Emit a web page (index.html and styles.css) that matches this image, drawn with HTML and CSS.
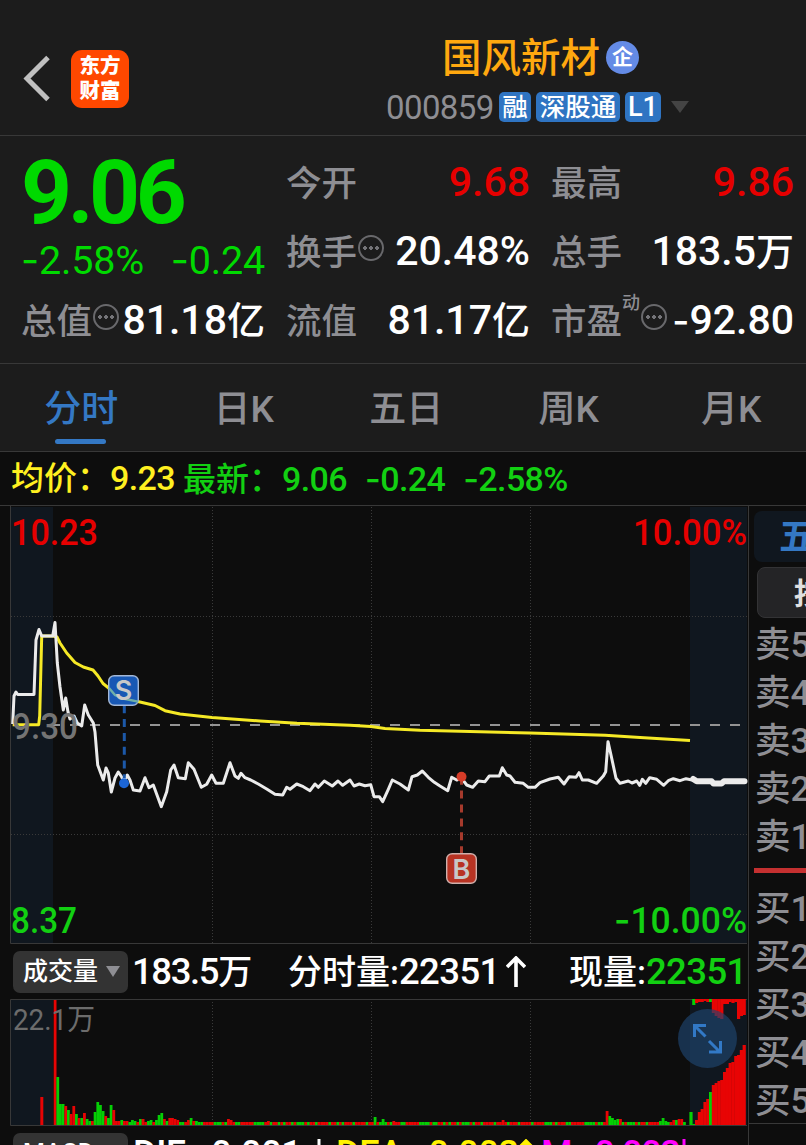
FILE: index.html
```html
<!DOCTYPE html>
<html lang="zh-CN">
<head>
    <meta charset="UTF-8">
    <meta name="viewport" content="width=device-width, initial-scale=1.0">
    <title>国风新材 000859</title>
    <link rel="stylesheet" href="styles.css">
</head>
<body>
    <header class="topbar">
        <svg class="back" width="30" height="50" viewBox="0 0 30 50">
            <path d="M27 3.5 6 24.5 27 45.5" fill="none" stroke="#c0c0c0" stroke-width="5"/>
        </svg>
        <div class="logo">东方<br>财富</div>
        <div class="stock">
            <div class="stock-name">国风新材<span class="badge">企</span></div>
            <div class="stock-code">
                <span class="code">000859</span>
                <span class="tag">融</span>
                <span class="tag tag-wide">深股通</span>
                <span class="tag tag-level">L1</span>
                <svg class="caret" width="18" height="12" viewBox="0 0 18 12"><path d="M0 0h18L9 12z" fill="#444"/></svg>
            </div>
        </div>
    </header>

    <!-- Quote -->
    <section class="quote">
        <div class="price">
            <div class="price-now">9.06</div>
            <div class="price-change"><span><i class="neg">-</i>2.58%</span><span><i class="neg">-</i>0.24</span></div>
        </div>
        <div class="stat"><span>今开</span><b class="up">9.68</b></div>
        <div class="stat"><span>最高</span><b class="up">9.86</b></div>
        <div class="stat"><span>换手</span><i class="more"></i><b>20.48%</b></div>
        <div class="stat"><span>总手</span><b>183.5<small>万</small></b></div>
        <div class="stat"><span>总值</span><i class="more"></i><b>81.18<small>亿</small></b></div>
        <div class="stat"><span>流值</span><b>81.17<small>亿</small></b></div>
        <div class="stat"><span>市盈</span><sup>动</sup><i class="more"></i><b><i class="neg">-</i>92.80</b></div>
    </section>

    <nav class="tabs">
        <a class="active">分时</a>
        <a>日K</a>
        <a>五日</a>
        <a>周K</a>
        <a>月K</a>
    </nav>

    <div class="summary">
        <span class="avg">均价：<em>9.23</em></span>
        <span class="last">最新：<em>9.06</em><em><i class="neg">-</i>0.24</em><em><i class="neg">-</i>2.58%</em></span>
    </div>

    <main class="board">
        <div class="charts">
            <!-- Price chart -->
            <svg class="chart" width="748" height="438" viewBox="0 506 748 438">
                <rect x="11" y="507" width="42" height="436" fill="#10171f"/>
                <rect x="690" y="507" width="57" height="436" fill="#10171f"/>
                <g class="grid">
                    <path d="M212.5 507V943M371.5 507V943M530.5 507V943"/>
                    <path d="M11 616.5H747M11 834.5H747"/>
                </g>
                <path class="frame" d="M10.5 506V943.5H747"/>
                <text class="lbl up" x="11" y="545" textLength="87" lengthAdjust="spacingAndGlyphs">10.23</text>
                <text class="lbl up" x="633" y="545" textLength="114" lengthAdjust="spacingAndGlyphs">10.00%</text>
                <text class="lbl down" x="11" y="933" textLength="66" lengthAdjust="spacingAndGlyphs">8.37</text>
                <text class="lbl down" x="614" y="933" textLength="133" lengthAdjust="spacingAndGlyphs"><tspan class="neg">-</tspan>10.00%</text>
                <path d="M50 725H741" stroke="#949494" stroke-width="2" stroke-dasharray="10 10"/>
                <polyline class="line-avg" points="12.7,724.7 38.7,724.7 39.7,716 41.7,636 53,636 57,637 60,643 66.7,653 75,662.5 83.3,667 93,670 98,676 103,683.5 108,687.5 115,695 123,698.5 140,702 155,705.5 165,710.7 180,714 212,717.5 260,721 297,723.3 350,725.3 371,726.5 385,728.5 420,730.3 530,733 605,735.3 640,737.5 690,740.5"/>
                <polyline class="line-price" points="12.7,724 14,696 16,692 17.7,694.5 34,694.5 36,640 39,629.5 41.7,636 52.7,636 55,622.5 57.3,663 60,687 63.3,710 65.7,698 68,712 70,719 74,716 77.3,723 81.7,726 84.7,705 88.3,715 93.3,723 95,732 97.7,765 103.3,780 106,768 108.3,773 111.3,792 115,778 118.3,772 121.7,777 124,782 127.3,775 130,780 133.3,790 140,791 145,777.7 149,787.7 153.3,785 161.3,806.7 166.7,791.7 170.7,770 174,765 178.3,777.7 185.3,778.7 188.3,762.7 194,769.3 201.3,787.3 206.7,784.3 211.7,775 216,783.3 223.3,783.3 230,762.7 235,776 238.3,778.3 241,773.3 245,777.7 250.7,780 258.3,784 266.7,789 275,794.3 282.7,795 286.7,787.3 290,789.3 296.7,784 303.3,786.7 310,790.7 315,784 318.3,787.3 324.3,781 332.3,786 338,781 342.7,785.3 350,780 354,786 359.3,784 365,785.7 370.7,784.7 374,796.7 379.3,796.7 382.7,801.7 388.3,789.3 392.3,780 400,784 408.3,790 412,776.7 417.3,775 422.3,771 428.3,777.3 434.3,782.3 440,786 447.7,790.7 451.7,777.3 456.7,780 461.7,778.3 466.7,785 472.7,787.3 478.3,781 485,781.7 489.3,776 499.3,776 502.3,767.7 506.7,775 510,776 515,782.3 523.3,783.3 528.3,787.3 535,787.3 540,782.7 550,779 558.3,777.3 564,784 569.3,776.7 576,777.3 579,772.7 582.3,780 588.3,780 596.7,783.3 603.3,776 605.7,771.7 608,741.7 611,755 616,778.3 620,783.3 628.3,781 632,783 636.7,781 639.7,785.3 642.3,779.3 645.7,783.3 649.7,777.7 656.7,779.3 663.7,785.3 668.3,780.7 673.3,778.7 680,780.7 686,778.7 692,780"/>
                <polyline class="line-price after" points="693.2,779 696.7,781.3 711.7,781.3 713.5,783.5 721.5,783.5 724,781.3 744.5,781.3"/>
                <text class="lbl mid" x="12" y="739" textLength="66" lengthAdjust="spacingAndGlyphs">9.30</text>

                <!-- Sell marker -->
                <path d="M124.3 705.3V778" stroke="#1c58a8" stroke-width="3" stroke-dasharray="8 5.8"/>
                <circle cx="124" cy="783.3" r="5" fill="#1c66d6"/>
                <rect x="108.7" y="675.7" width="29.6" height="29.6" rx="5.5" fill="#1858b4" stroke="#a3b8d8" stroke-width="1.4"/>
                <path d="M109 688 115 695 123 698.5 138 701.6" fill="none" stroke="#6fb0a8" stroke-width="2.4"/>
                <text class="mark" x="123.5" y="700">S</text>

                <!-- Buy marker -->
                <path d="M461.5 776.7V853" stroke="#a63a2c" stroke-width="3" stroke-dasharray="8 5.9"/>
                <circle cx="461.5" cy="776.7" r="5" fill="#d63c28"/>
                <rect x="446.7" y="853.7" width="29.6" height="29.6" rx="5.5" fill="#b83323" stroke="#d0b0ac" stroke-width="1.4"/>
                <text class="mark" x="461.5" y="878.5">B</text>
            </svg>

            <div class="indicator">
                <button class="picker">成交量<i class="tri"></i></button>
                <span class="ind-total"><em>183.5</em>万</span>
                <span class="ind-minute">分时量:<em>22351</em></span>
                <svg class="arrow" width="20" height="31" viewBox="0 0 20 31"><path d="M10 31V2M1 11l9-9 9 9" fill="none" stroke="#fff" stroke-width="3.6"/></svg>
                <span class="ind-now">现量:<em class="down">22351</em></span>
            </div>

            <!-- Volume chart -->
            <div class="volume">
                <svg class="chart" width="748" height="127" viewBox="0 999 748 127">
                    <rect x="11" y="1000" width="42" height="125" fill="#10171f"/>
                    <rect x="690" y="1000" width="57" height="125" fill="#10171f"/>
                    <path class="grid" d="M212.5 1002V1125M371.5 1002V1125M530.5 1002V1125"/>
                    <path class="frame" d="M747 999.5H10.5V1125.5H747"/>
                    <g id="bars"></g>
                    <text class="lbl-vol" x="13" y="1030" textLength="82" lengthAdjust="spacingAndGlyphs">22.1万</text>
                </svg>
                <button class="expand">
                    <svg width="59" height="59" viewBox="0 0 59 59" fill="none" stroke="#3279c6" stroke-width="3">
                        <path d="M28 16.5H16.5V28M17 17 27.5 27.5M31 32 42 43M42.5 32V43H31"/>
                    </svg>
                </button>
            </div>

            <div class="indicator macd">
                <button class="picker">MACD<i class="tri"></i></button>
                <span class="dif">DIF:<i class="neg">-</i>0.001</span>
                <svg class="arrow" width="18" height="30" viewBox="0 0 18 30"><path d="M9 0V28M1 20l8 8 8-8" fill="none" stroke="#fff" stroke-width="3"/></svg>
                <span class="dea">DEA:<i class="neg">-</i>0.002</span>
                <svg class="arrow" width="20" height="30" viewBox="0 0 20 30"><path d="M10 30V2M1 11l9-9 9 9" fill="none" stroke="#fff200" stroke-width="3.4"/></svg>
                <span class="m">M:<i class="neg">-</i>0.002</span>
                <svg class="arrow" width="18" height="30" viewBox="0 0 18 30"><path d="M9 0V28M1 20l8 8 8-8" fill="none" stroke="#ff00ff" stroke-width="3"/></svg>
            </div>
        </div>

        <!-- Order book -->
        <aside class="book">
            <div class="book-tab">五档</div>
            <div class="book-btn">按</div>
            <ul>
                <li>卖5</li>
                <li>卖4</li>
                <li>卖3</li>
                <li>卖2</li>
                <li>卖1</li>
            </ul>
            <div class="spread"></div>
            <ul>
                <li>买1</li>
                <li>买2</li>
                <li>买3</li>
                <li>买4</li>
                <li>买5</li>
            </ul>
        </aside>
    </main>

    <script src="script.js"></script>
</body>
</html>
```
FILE: styles.css
```css
* {
    margin: 0;
    padding: 0;
    box-sizing: border-box;
}

body {
    width: 806px;
    height: 1145px;
    overflow: hidden;
    background: #0d0d0d;
    color: #fff;
    font-family: Roboto, "Noto Sans CJK SC", sans-serif;
    font-weight: 500;
}

em,
i {
    font-style: normal;
}

button {
    border: none;
    font-family: inherit;
    color: inherit;
}

.up {
    color: #e60000;
    fill: #e60000;
}

.down {
    color: #12d012;
    fill: #12d012;
}

/* wider minus sign */
.neg {
    font-family: Inter, sans-serif;
}

/* Header */
.topbar {
    display: flex;
    height: 136px;
    padding-left: 21px;
    background: #1c1c1c;
    border-bottom: 1px solid #383838;
}

.back {
    margin-top: 54px;
}

.logo {
    width: 58px;
    height: 58px;
    margin: 50px 0 0 20px;
    padding-top: 4px;
    border-radius: 11px;
    background: #ff4800;
    font-size: 20.5px;
    font-weight: 900;
    line-height: 25px;
    text-align: center;
}

.stock {
    margin-left: 257px;
    padding-top: 32px;
}

.stock-name {
    display: flex;
    align-items: center;
    height: 50px;
    margin: -3px 0 0 56px;
    font-size: 39.5px;
    color: #ffa80f;
}

.badge {
    width: 33px;
    height: 33px;
    margin: 6px 0 0 6px;
    border-radius: 50%;
    background: #648be6;
    color: #fff;
    font-size: 21px;
    font-weight: 700;
    line-height: 32px;
    text-align: center;
}

.stock-code {
    display: flex;
    align-items: center;
    height: 30px;
    margin-top: 13px;
}

.code {
    width: 113px;
    color: #8e8e93;
    font-size: 33px;
    font-weight: 400;
    letter-spacing: -0.6px;
}

.tag {
    width: 32px;
    height: 30px;
    margin-right: 5px;
    border-radius: 5px;
    background: #2f74c2;
    font-size: 25.5px;
    line-height: 30px;
    text-align: center;
}

.tag-wide {
    width: 84px;
}

.tag-level {
    width: 36px;
    font-size: 27px;
}

.caret {
    margin-left: 5px;
}

/* Quote */
.quote {
    display: grid;
    grid-template-columns: 244px 244px 243px;
    grid-auto-rows: 69px;
    column-gap: 21px;
    height: 228px;
    padding: 12px 12px 0 21px;
    background: #1c1c1c;
    border-bottom: 1px solid #383838;
}

.price {
    grid-row: span 2;
    color: #00d900;
}

.price-now {
    height: 89px;
    font-size: 89px;
    font-weight: 700;
    line-height: 89px;
    letter-spacing: -4.4px;
}

.price-change {
    display: flex;
    justify-content: space-between;
    font-size: 39.5px;
    font-weight: 400;
    line-height: 46px;
    letter-spacing: -0.2px;
}

.stat {
    display: flex;
    align-items: baseline;
    color: #8e8e93;
    font-size: 35.5px;
    line-height: 69px;
    white-space: nowrap;
}

.stat b {
    margin-left: auto;
    color: #fff;
    font-size: 41px;
    font-weight: 500;
}

.stat b.up {
    color: #e60000;
}

.stat b .neg {
    font-size: 37px;
}

.stat small {
    font-size: 38px;
}

.stat sup {
    align-self: flex-start;
    margin-top: 6px;
    font-size: 18px;
    line-height: 22px;
}

/* circle with three dots */
.more {
    align-self: flex-start;
    width: 26px;
    height: 26px;
    margin: 18px 0 0 1px;
    border: 2px solid #69696c;
    border-radius: 50%;
    background:
        radial-gradient(circle, #747478 1.6px, transparent 2px) 50% 50% / 6px 6px no-repeat,
        radial-gradient(circle, #747478 1.6px, transparent 2px) 2px 50% / 6px 6px no-repeat,
        radial-gradient(circle, #747478 1.6px, transparent 2px) 14px 50% / 6px 6px no-repeat;
}

/* Tabs */
.tabs {
    display: flex;
    height: 88px;
    background: #1c1c1c;
    border-bottom: 1px solid #383838;
}

.tabs a {
    position: relative;
    flex: 0 0 162.5px;
    color: #8e8e93;
    font-size: 37px;
    line-height: 92px;
    text-align: center;
}

.tabs .active {
    color: #3478c4;
}

.tabs .active::after {
    content: "";
    position: absolute;
    left: 55px;
    bottom: 7px;
    width: 51px;
    height: 5px;
    border-radius: 3px;
    background: #3478c4;
}

.summary {
    display: flex;
    height: 54px;
    padding-left: 11px;
    border-bottom: 1px solid #383838;
    font-size: 33px;
    line-height: 53px;
    white-space: nowrap;
}

.summary em {
    margin-right: 18px;
    font-size: 34px;
    letter-spacing: -0.6px;
}

.avg {
    width: 172px;
    color: #fff020;
}

.last {
    color: #12d012;
}

/* Charts */
.board {
    display: flex;
    height: 639px;
}

.charts {
    width: 748px;
    flex: none;
}

.chart {
    display: block;
}

.frame {
    fill: none;
    stroke: #383838;
}

.grid {
    fill: none;
    stroke: #3a3a3a;
    stroke-dasharray: 1 2;
}

.lbl {
    font-size: 36.5px;
}

.mid {
    fill: #747474;
}

.lbl-vol {
    fill: #6c6c6c;
    font-size: 29px;
    font-weight: 400;
}

.line-avg,
.line-price {
    fill: none;
    stroke: #f5e926;
    stroke-width: 3;
    stroke-linejoin: round;
}

.line-price {
    stroke: #ebebeb;
}

.after {
    stroke-width: 6;
    stroke-linecap: round;
}

.mark {
    fill: #c8c8c8;
    font-family: Inter, sans-serif;
    font-size: 27px;
    font-weight: 600;
    text-anchor: middle;
}

.indicator {
    display: flex;
    align-items: center;
    height: 55px;
    padding-left: 13px;
    font-size: 34px;
    line-height: 58px;
    white-space: nowrap;
}

.indicator em {
    font-size: 36.5px;
    letter-spacing: -0.6px;
}

.picker {
    display: flex;
    align-items: center;
    flex: none;
    width: 115px;
    height: 42px;
    padding-left: 10px;
    border-radius: 7px;
    background: #333;
    font-size: 25px;
    font-weight: 500;
    line-height: 42px;
}

.tri {
    margin-left: 8px;
    border: 7px solid transparent;
    border-top: 11px solid #8e8e93;
    border-bottom: none;
}

.ind-total {
    width: 156px;
    margin-left: 4px;
}

.ind-total em {
    letter-spacing: -1.4px;
}

.ind-minute {
    width: 218px;
}

.ind-now {
    margin-left: 43px;
}

.volume {
    position: relative;
}

.expand {
    position: absolute;
    left: 678px;
    top: 10px;
    width: 59px;
    height: 59px;
    border-radius: 50%;
    background: rgba(31, 69, 112, 0.65);
}

.macd {
    height: 55px;
    font-size: 36px;
    line-height: 54px;
    letter-spacing: -0.3px;
}

.macd .picker {
    line-height: 40px;
}

.dif {
    width: 177px;
    margin-left: 5px;
}

.dea {
    width: 180px;
    margin-left: 8px;
    color: #fff200;
}

.m {
    width: 134px;
    margin-left: 5px;
    color: #f0f;
    letter-spacing: -1.4px;
}

/* Order book */
.book {
    width: 58px;
    height: 639px;
    overflow: hidden;
    border-left: 1px solid #383838;
    color: #8e8e93;
    font-size: 35.5px;
    white-space: nowrap;
}

.book-tab {
    width: 120px;
    height: 51px;
    margin: 5px 0 5px 5px;
    padding-left: 25px;
    border-radius: 8px;
    background: #10171f;
    color: #3478c4;
    font-weight: 700;
    line-height: 53px;
}

.book-btn {
    width: 120px;
    height: 51px;
    margin-left: 8px;
    padding-left: 36px;
    border: 1px solid #333335;
    border-radius: 8px;
    background: #242426;
    color: #e0e0e0;
    font-size: 30px;
    font-weight: 700;
    line-height: 51px;
}

.book ul {
    padding-left: 6px;
    list-style: none;
}

.book li {
    height: 48px;
    line-height: 54px;
}

.spread {
    height: 5px;
    margin: 10px 0 9px 5px;
    background: #c43030;
}

.book ul:last-child {
    height: 242px;
    border-bottom: 1px solid #383838;
}
```
FILE: script.js
```js
// volume per minute, height in px, g = fell, r = rose
const minutes = ('125r 48g 21g 21g 19r 15g 11r 19r 11g 7r 7g 12r 6g 4g 4r 13g 23g 20g 14g 9r 7g 20g 15r 4r 4r 5g 4r 4r 3g 5g 4g ' +
    '3r 6g 6r 3r 4g 5g 3r 5g 10g 12g 6r 4g 7r 7r 6r 5r 3g 3g 3r 5r 7g 4r 4g 3g').split(' ');

// quiet stretch of the day
const quiet = 'grgrrrggrrrrrggggrggrrgrgrrgrgggrgrrgrrrrgrrgrgrrrgrrrrgrrrrgg';
const spikes = {65: '6r', 66: '5r', 80: '4r', 120: '8g', 123: '6g', 127: '4r', 168: '5r', 207: '14r', 208: '9g', 209: '7g',
    210: '5g', 211: '6g', 212: '6r', 227: '4g', 228: '7g', 229: '4g', 232: '5r', 233: '5g', 234: '6r', 235: '6r'};

for (let i = minutes.length; i < 237; i++) {
    minutes.push(spikes[i] || '3' + quiet[i % quiet.length]);
}

// call auction at the close: bars from the bottom and unmatched volume from the top
const closing = '13g 1g 5r 13r 16r 23r 26r 33g 40r 42r 44r 45r 53r 57r 62r 63r 69r 70r 75r 80r'.split(' ');
const unmatched = '0g 6g 4r 3r 3r 2r 3r 3g 14r 17r 19r 20r 5r 5r 3r 4r 3r 20r 17r 16r'.split(' ');

function bar(x, width, item, fromTop) {
    const height = parseInt(item);
    const color = item.endsWith('g') ? '#05cf05' : '#e80404';
    const y = fromTop ? 999 : 1125 - height;
    return `<rect x="${x.toFixed(2)}" y="${y}" width="${width}" height="${height}" fill="${color}"/>`;
}

let html = bar(40.3, 3, '28r');
minutes.forEach((item, i) => html += bar(53.7 + i * 8 / 3, 2.8, item));
closing.forEach((item, i) => html += bar(689.4 + i * 2.8, 3.2, item));
unmatched.forEach((item, i) => html += bar(689.4 + i * 2.8, 3.2, item, true));
document.getElementById('bars').innerHTML = html;
```
